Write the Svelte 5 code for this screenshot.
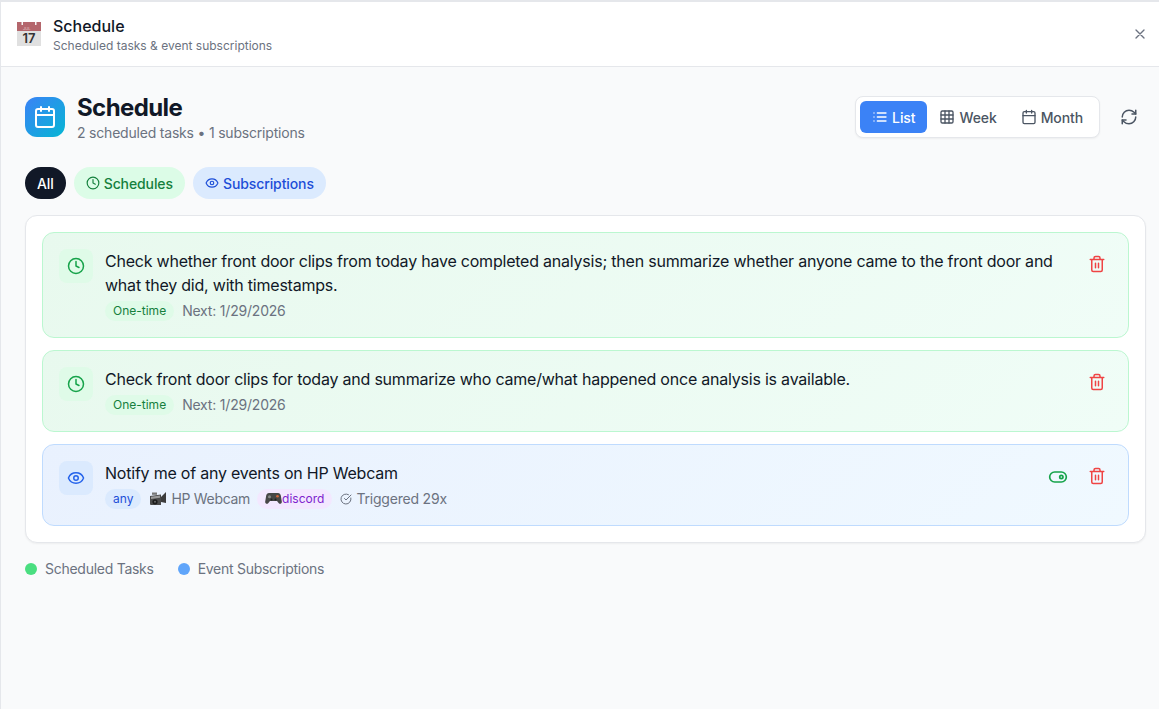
<script>
  const tasks = [
    {
      title: 'Check whether front door clips from today have completed analysis; then summarize whether anyone came to the front door and what they did, with timestamps.',
      next: '1/29/2026'
    },
    {
      title: 'Check front door clips for today and summarize who came/what happened once analysis is available.',
      next: '1/29/2026'
    }
  ];
</script>

{#snippet clock(size)}
  <svg width={size} height={size} viewBox="0 0 24 24" fill="none" stroke="currentColor" stroke-width="2" stroke-linecap="round" stroke-linejoin="round"><circle cx="12" cy="12" r="10" /><path d="M12 6v6l4 2" /></svg>
{/snippet}

{#snippet eye(size)}
  <svg width={size} height={size} viewBox="0 0 24 24" fill="none" stroke="currentColor" stroke-width="2" stroke-linecap="round" stroke-linejoin="round"><path d="M2.06 12.35a1 1 0 0 1 0-.7 10.75 10.75 0 0 1 19.88 0 1 1 0 0 1 0 .7 10.75 10.75 0 0 1-19.88 0" /><circle cx="12" cy="12" r="3" /></svg>
{/snippet}

{#snippet calendar(size, width)}
  <svg width={size} height={size} viewBox="0 0 24 24" fill="none" stroke="currentColor" stroke-width={width} stroke-linecap="round" stroke-linejoin="round"><path d="M8 2v4M16 2v4" /><rect x="3" y="4" width="18" height="18" rx="2" /><path d="M3 10h18" /></svg>
{/snippet}

{#snippet trash()}
  <svg width="18" height="18" viewBox="0 0 24 24" fill="none" stroke="currentColor" stroke-width="2" stroke-linecap="round" stroke-linejoin="round"><path d="M3 6h18M19 6v14a2 2 0 0 1-2 2H7a2 2 0 0 1-2-2V6M8 6V4a2 2 0 0 1 2-2h4a2 2 0 0 1 2 2v2M10 11v6M14 11v6" /></svg>
{/snippet}

<div class="window">
  <header class="topbar">
    <div class="topbar-left">
      <svg class="cal-emoji" width="24" height="24" viewBox="0 0 24 24">
        <rect x="0" y="0" width="24" height="24" fill="#e0e0e0" />
        <rect x="0" y="0" width="24" height="9" fill="#b4666c" />
        <rect x="4.500" y="0" width="1.500" height="3" fill="#f4f4f4" />
        <rect x="18" y="0" width="1.500" height="3" fill="#f4f4f4" />
        <text x="6" y="8" class="cal-month">JUL</text>
        <text x="12" y="21" text-anchor="middle" class="cal-num">17</text>
      </svg>
      <div>
        <div class="topbar-title">Schedule</div>
        <div class="topbar-sub">Scheduled tasks &amp; event subscriptions</div>
      </div>
    </div>
    <button class="close" aria-label="Close">
      <svg width="16" height="16" viewBox="0 0 24 24" fill="none" stroke="currentColor" stroke-width="2" stroke-linecap="round"><path d="M18 6 6 18M6 6l12 12" /></svg>
    </button>
  </header>

  <main class="content">
    <div class="heading-row">
      <div class="heading">
        <div class="app-icon">{@render calendar(24, 2)}</div>
        <div>
          <h1>Schedule</h1>
          <p>2 scheduled tasks • 1 subscriptions</p>
        </div>
      </div>
      <div class="heading-actions">
        <div class="switcher">
          <button class="view active">
            <svg width="16" height="16" viewBox="0 0 24 24" fill="none" stroke="currentColor" stroke-width="2" stroke-linecap="round"><path d="M3 6h.01M3 12h.01M3 18h.01M8 6h13M8 12h13M8 18h13" /></svg>
            List
          </button>
          <button class="view">
            <svg width="16" height="16" viewBox="0 0 24 24" fill="none" stroke="currentColor" stroke-width="2" stroke-linecap="round" stroke-linejoin="round"><rect x="3" y="3" width="18" height="18" rx="2" /><path d="M3 9h18M3 15h18M9 3v18M15 3v18" /></svg>
            Week
          </button>
          <button class="view">{@render calendar(16, 2)} Month</button>
        </div>
        <button class="refresh" aria-label="Refresh">
          <svg width="18" height="18" viewBox="0 0 24 24" fill="none" stroke="currentColor" stroke-width="2" stroke-linecap="round" stroke-linejoin="round"><path d="M3 12a9 9 0 0 1 9-9 9.750 9.750 0 0 1 6.740 2.740L21 8" /><path d="M21 3v5h-5" /><path d="M21 12a9 9 0 0 1-9 9 9.750 9.750 0 0 1-6.740-2.740L3 16" /><path d="M8 16H3v5" /></svg>
        </button>
      </div>
    </div>

    <div class="filters">
      <button class="pill all">All</button>
      <button class="pill sched">{@render clock(14)} Schedules</button>
      <button class="pill subs">{@render eye(14)} Subscriptions</button>
    </div>

    <section class="panel">
      {#each tasks as task}
        <article class="item green">
          <div class="item-icon">{@render clock(18)}</div>
          <div class="item-body">
            <div class="item-title">{task.title}</div>
            <div class="meta">
              <span class="tag tag-green">One-time</span>
              <span>Next: {task.next}</span>
            </div>
          </div>
          <div class="item-actions">
            <button class="del" aria-label="Delete">{@render trash()}</button>
          </div>
        </article>
      {/each}

      <article class="item blue">
        <div class="item-icon">{@render eye(18)}</div>
        <div class="item-body">
          <div class="item-title">Notify me of any events on HP Webcam</div>
          <div class="meta">
            <span class="tag tag-blue">any</span>
            <span class="cam">
              <svg width="18" height="16" viewBox="0 0 18 16">
                <path d="M1 5l11-1.500V14H2a1 1 0 0 1-1-1z" fill="#4a4a4a" />
                <path d="M2 5.800l9-1.200v2.200L2 8z" fill="#9a9a9a" />
                <circle cx="6" cy="10.800" r="2.600" fill="#1c1c1c" />
                <circle cx="6" cy="10.800" r="1" fill="#666" />
                <path d="M12 6l5-5v11l-5-1z" fill="#3c3c3c" />
                <rect x="3" y="1.500" width="5" height="2.300" fill="#777" />
              </svg>
              HP Webcam
            </span>
            <span class="tag tag-purple">
              <svg width="17" height="14" viewBox="0 0 17 14">
                <path d="M4 1h9c1.600 0 2.400 1 2.800 2.600l1 6c.3 2-1.800 3-3 1.600L12 9H5l-1.800 2.200C2 12.600-.1 11.600.2 9.600l1-6C1.600 2 2.400 1 4 1z" fill="#474747" />
                <circle cx="12.500" cy="4.200" r="1.300" fill="#d9683c" />
                <circle cx="4.500" cy="4.800" r="1.500" fill="#8a8a8a" />
                <circle cx="6.500" cy="7.400" r="1" fill="#222" />
                <circle cx="10.500" cy="7.400" r="1" fill="#222" />
              </svg>discord</span>
            <span class="triggered">
              <svg width="12" height="12" viewBox="0 0 24 24" fill="none" stroke="currentColor" stroke-width="2" stroke-linecap="round" stroke-linejoin="round"><path d="M21.800 10A10 10 0 1 1 17 3.340" /><path d="m9 11 3 3L22 4" /></svg>
              Triggered 29x
            </span>
          </div>
        </div>
        <div class="item-actions">
          <button class="toggle" aria-label="Toggle">
            <svg width="20" height="20" viewBox="0 0 24 24" fill="none" stroke="currentColor" stroke-width="2" stroke-linecap="round" stroke-linejoin="round"><rect x="2" y="6" width="20" height="12" rx="6" /><circle cx="16" cy="12" r="2" /></svg>
          </button>
          <button class="del" aria-label="Delete">{@render trash()}</button>
        </div>
      </article>
    </section>

    <div class="legend">
      <span class="legend-item"><i class="dot dot-green"></i>Scheduled Tasks</span>
      <span class="legend-item"><i class="dot dot-blue"></i>Event Subscriptions</span>
    </div>
  </main>
</div>

<style>
  :global(body) {
    margin: 0;
    background: #f9fafb;
    font-family: Inter, "Liberation Sans", sans-serif;
  }

  button {
    font: inherit;
    border: 0;
    background: none;
    padding: 0;
    cursor: pointer;
  }

  .window {
    box-sizing: border-box;
    height: 709px;
    overflow: hidden;
    border-left: 1px solid #e5e7eb;
    border-top: 2px solid #e5e7eb;
    background: #f9fafb;
  }

  .topbar {
    box-sizing: border-box;
    height: 65px;
    display: flex;
    align-items: center;
    justify-content: space-between;
    padding: 0 7px 0 16px;
    background: #fff;
    border-bottom: 1px solid #e5e7eb;
  }

  .topbar-left {
    display: flex;
    align-items: center;
    gap: 12px;
  }

  .cal-emoji {
    display: block;
  }

  .cal-month {
    font-size: 4px;
    fill: #e8c8c8;
  }

  .cal-num {
    font-size: 13px;
    font-weight: 600;
    fill: #333;
  }

  .topbar-title {
    font-size: 16px;
    line-height: 24px;
    font-weight: 500;
    color: #111827;
  }

  .topbar-sub {
    font-size: 12px;
    line-height: 16px;
    color: #6b7280;
  }

  .close {
    display: flex;
    padding: 4px;
    color: #6b7280;
  }

  .content {
    padding: 29px 13px 0 24px;
    letter-spacing: -0.2px;
  }

  .heading-row {
    display: flex;
    justify-content: space-between;
    align-items: center;
    height: 42px;
    margin-bottom: 29px;
  }

  .heading {
    display: flex;
    align-items: center;
    gap: 12px;
  }

  .app-icon {
    width: 40px;
    height: 40px;
    border-radius: 12px;
    display: flex;
    align-items: center;
    justify-content: center;
    color: #fff;
    background: linear-gradient(135deg, #3b82f6, #06b6d4);
  }

  h1 {
    margin: 0;
    font-size: 24px;
    line-height: 34px;
    font-weight: 700;
    letter-spacing: -0.6px;
    color: #111827;
  }

  .heading p {
    margin: -2px 0 0;
    font-size: 14px;
    line-height: 20px;
    letter-spacing: -0.2px;
    color: #6b7280;
  }

  .heading-actions {
    display: flex;
    align-items: center;
    gap: 12px;
  }

  .switcher {
    box-sizing: border-box;
    height: 42px;
    display: flex;
    align-items: center;
    padding: 4px;
    background: #fff;
    border: 1px solid #e5e7eb;
    border-radius: 8px;
    box-shadow: 0 1px 2px rgba(0, 0, 0, 0.05);
  }

  .view {
    height: 32px;
    display: flex;
    align-items: center;
    gap: 4px;
    padding: 0 12px;
    border-radius: 6px;
    font-size: 14px;
    font-weight: 450;
    letter-spacing: -0.1px;
    color: #4b5563;
  }

  .view.active {
    background: #3b82f6;
    color: #fff;
  }

  .refresh {
    display: flex;
    padding: 8px;
    color: #4b5563;
  }

  .filters {
    display: flex;
    gap: 8px;
    margin-bottom: 16px;
  }

  .pill {
    height: 32px;
    display: flex;
    align-items: center;
    gap: 4px;
    padding: 0 12px;
    border-radius: 999px;
    font-size: 14px;
    font-weight: 450;
    letter-spacing: -0.1px;
  }

  .pill.all {
    background: #111827;
    color: #fff;
  }

  .pill.sched {
    background: #dcfce7;
    color: #15803d;
  }

  .pill.subs {
    background: #dbeafe;
    color: #1d4ed8;
  }

  .panel {
    display: flex;
    flex-direction: column;
    gap: 12px;
    padding: 16px;
    background: #fff;
    border: 1px solid #e5e7eb;
    border-radius: 12px;
    box-shadow: 0 1px 2px rgba(0, 0, 0, 0.05);
  }

  .item {
    display: flex;
    align-items: flex-start;
    gap: 12px;
    padding: 16px;
    border-radius: 12px;
    border: 1px solid;
  }

  .item.green {
    border-color: #bbf7d0;
    background: linear-gradient(135deg, #e8f9ee, #f0fdf7);
  }

  .item.blue {
    border-color: #bfdbfe;
    background: linear-gradient(135deg, #e9f1fe, #f0f9ff);
  }

  .item-icon {
    flex: none;
    width: 34px;
    height: 34px;
    border-radius: 8px;
    display: flex;
    align-items: center;
    justify-content: center;
  }

  .green .item-icon {
    background: #dffbe8;
    color: #16a34a;
  }

  .blue .item-icon {
    background: #dbeafe;
    color: #2563eb;
  }

  .item-body {
    flex: 1;
    min-width: 0;
  }

  .item-title {
    font-size: 16px;
    line-height: 24px;
    font-weight: 400;
    letter-spacing: -0.22px;
    color: #111827;
  }

  .meta {
    display: flex;
    align-items: center;
    gap: 8px;
    margin-top: 4px;
    font-size: 14px;
    line-height: 20px;
    color: #6b7280;
  }

  .tag {
    display: inline-flex;
    align-items: center;
    height: 20px;
    padding: 0 8px;
    border-radius: 999px;
    font-size: 12px;
    letter-spacing: 0;
  }

  .tag-green {
    background: #dffbe8;
    color: #15803d;
  }

  .tag-blue {
    background: #dbeafe;
    color: #1d4ed8;
  }

  .tag-purple {
    background: #f3e8ff;
    color: #7e22ce;
  }

  .cam,
  .triggered {
    display: inline-flex;
    align-items: center;
    gap: 4px;
  }

  .cam {
    letter-spacing: -0.3px;
    margin-right: -1px;
  }

  .item-actions {
    display: flex;
    align-items: center;
    gap: 14px;
    padding-left: 12px;
  }

  .del {
    display: flex;
    padding: 6px;
    color: #ef4444;
  }

  .toggle {
    display: flex;
    margin-top: 1px;
    color: #16a34a;
  }

  .legend {
    display: flex;
    gap: 24px;
    margin-top: 16px;
    font-size: 14px;
    line-height: 20px;
    letter-spacing: -0.27px;
    color: #6b7280;
  }

  .legend-item {
    display: flex;
    align-items: center;
    gap: 8px;
  }

  .dot {
    width: 12px;
    height: 12px;
    border-radius: 50%;
  }

  .dot-green {
    background: #4ade80;
  }

  .dot-blue {
    background: #60a5fa;
  }
</style>
